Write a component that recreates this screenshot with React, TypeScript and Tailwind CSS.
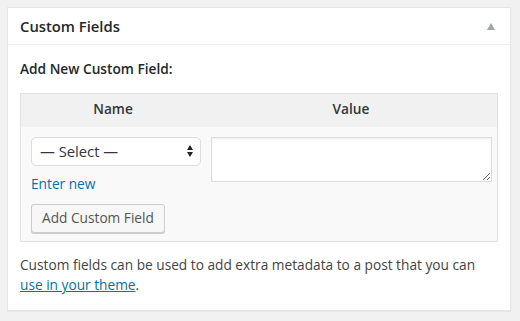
import React from "react";

const FF = '"Open Sans", "Liberation Sans", sans-serif';

export default function App() {
  return (
    <div
      className="w-[520px] h-[321px] bg-[#f1f1f1] pt-[7px] pl-[7px] text-[#444]"
      style={{ fontFamily: FF }}
    >
      <div className="w-[504px] h-[304px] bg-white border border-[#e5e5e5] shadow-[0_1px_1px_rgba(0,0,0,0.04)] flex flex-col">
        <div className="flex items-center justify-between h-[37px] border-b border-[#eee] px-3">
          <h2 className="text-[14.8px] leading-[20px] font-semibold text-[#23282d]">Custom Fields</h2>
          <svg width="8" height="7" viewBox="0 0 8 7" className="mr-[3px]">
            <polygon points="4,0 8,7 0,7" fill="#a0a5aa" />
          </svg>
        </div>
        <div className="px-3 pt-[14px] pb-[14px] flex flex-col">
          <p className="text-[13.7px] leading-[20px] font-semibold text-[#23282d]">Add New Custom Field:</p>
          <div className="mt-[14px] border border-[#e1e1e1] bg-[#f9f9f9]">
            <div className="grid grid-cols-[184px_1fr] bg-[#f1f1f1]">
              <div className="pt-[5px] pb-[8px] text-center text-[13.7px] leading-[20px] font-semibold text-[#32373c]">Name</div>
              <div className="pt-[5px] pb-[8px] text-center text-[13.7px] leading-[20px] font-semibold text-[#32373c]">Value</div>
            </div>
            <div className="grid grid-cols-[184px_1fr]">
              <div className="pl-[10px] pt-[10px] pb-[8px] flex flex-col items-start">
                <div className="relative w-[170px] h-[29px]">
                  <select
                    className="appearance-none w-full h-full bg-white border border-[#ddd] rounded-[5px] pl-[8px] text-[14.8px] text-[#32373c] outline-none"
                    style={{ fontFamily: FF }}
                    defaultValue="sel"
                  >
                    <option value="sel">— Select —</option>
                  </select>
                  <svg width="6" height="12" viewBox="0 0 6 12" className="absolute right-[8px] top-[8px] pointer-events-none">
                    <polygon points="3,0 6,5 0,5" fill="#222" />
                    <polygon points="0,7 6,7 3,12" fill="#222" />
                  </svg>
                </div>
                <a className="mt-[8px] text-[13.7px] leading-[20px] text-[#0073aa]">Enter new</a>
                <button
                  className="mt-[10px] h-[29px] px-[10px] text-[13.7px] text-[#555] bg-[#f7f7f7] border border-[#ccc] rounded-[3px] shadow-[0_1px_0_#ccc]"
                  style={{ fontFamily: FF }}
                >
                  Add Custom Field
                </button>
              </div>
              <div className="pl-[6px] pt-[10px]">
                <textarea className="block w-[281px] h-[45px] bg-white border border-[#ddd] shadow-[inset_0_1px_2px_rgba(0,0,0,0.07)] outline-none" />
              </div>
            </div>
          </div>
          <p className="mt-[13px] text-[13.7px] leading-[20px] text-[#444] whitespace-nowrap">
            Custom fields can be used to add extra metadata to a post that you can
            <br />
            <a className="text-[#0073aa] underline">use in your theme</a>.
          </p>
        </div>
      </div>
    </div>
  );
}
